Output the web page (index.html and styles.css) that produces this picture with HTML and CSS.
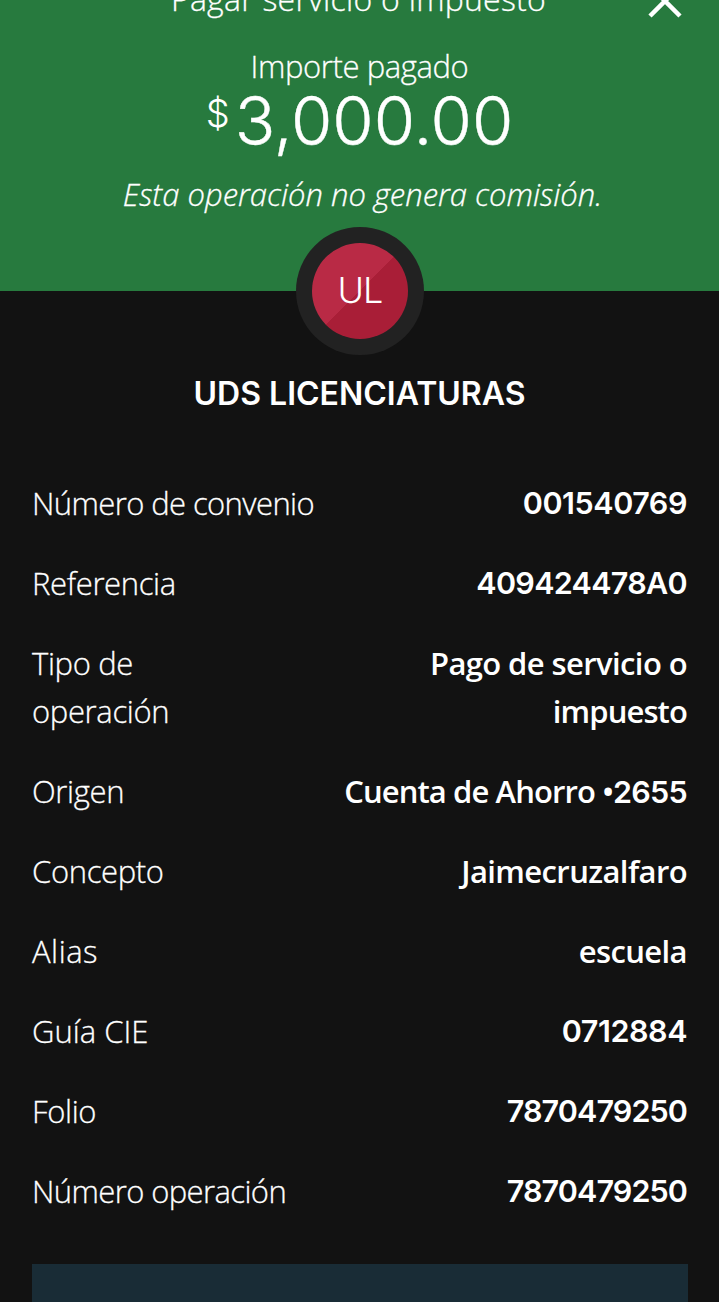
FILE: index.html
```html
<!DOCTYPE html>
<html lang="es"><head><meta charset="utf-8"><title>Pago</title><link rel="stylesheet" href="styles.css"></head>
<body>
<main class="screen">
<header class="hero">
<div class="topbar"><h1 class="title">Pagar servicio o impuesto</h1>
<svg class="close" width="34" height="34" viewBox="0 0 34 34"><path d="M2 2 32 32M32 2 2 32"/></svg></div>
<p class="label">Importe pagado</p>
<p class="amount"><span class="currency">$</span><span class="figure">3,000.00</span></p>
<p class="note">Esta operación no genera comisión.</p>
<div class="avatar"><span class="disc">UL</span></div>
</header>
<h2 class="payee">UDS LICENCIATURAS</h2>
<dl class="details">
<div class="row"><dt class="tight">Número de convenio</dt><dd class="num wide">001540769</dd></div>
<div class="row"><dt>Referencia</dt><dd class="num">409424478A0</dd></div>
<div class="row"><dt>Tipo de<br>operación</dt><dd>Pago de servicio o<br><span class="narrow">impuesto</span></dd></div>
<div class="row"><dt>Origen</dt><dd class="account">Cuenta de Ahorro •<span class="num">2655</span></dd></div>
<div class="row"><dt>Concepto</dt><dd>Jaimecruzalfaro</dd></div>
<div class="row"><dt class="loose">Alias</dt><dd>escuela</dd></div>
<div class="row"><dt class="even">Guía CIE</dt><dd class="num wide">0712884</dd></div>
<div class="row"><dt>Folio</dt><dd class="num folio">7870479250</dd></div>
<div class="row"><dt class="tight">Número operación</dt><dd class="num folio">7870479250</dd></div>
</dl>
<div class="panel"></div>
</main>
</body></html>
```
FILE: styles.css
```css
*{box-sizing:border-box;margin:0;padding:0}
body{background:#121212;color:#fff;font-family:"Open Sans",sans-serif;font-weight:300}
.screen{width:719px;height:1302px;overflow:hidden;display:flex;flex-direction:column}
.hero{position:relative;height:291px;flex:none;background:#277a3e;text-align:center}
.topbar{height:43px;position:relative}
.title,.label,.note,dt{-webkit-text-stroke:.3px #fff}
.title{font-size:32px;font-weight:300;line-height:44px;letter-spacing:.25px;position:relative;left:-1px;top:-23px}
.close{position:absolute;left:648px;top:-16px;fill:none;stroke:#fff;stroke-width:4.5}
.label{font-size:31px;line-height:46px;letter-spacing:-.4px}
.amount{height:83px;display:flex;justify-content:center;line-height:63px;font-family:Inter,sans-serif}
.currency{font-size:38px;line-height:49px;margin-right:5px}
.figure{font-size:67px;-webkit-text-stroke:.4px #fff}
.note{font-size:31px;line-height:44px;font-style:italic;padding-left:6px}
.avatar{position:absolute;left:296px;top:227px;width:128px;height:128px;border-radius:50%;background:#222;padding:16px}
.disc{display:block;height:96px;border-radius:50%;background:linear-gradient(135deg,#b92a45 50%,#a91e37 50%);font-family:Inter,sans-serif;font-size:36px;line-height:94px;letter-spacing:-1px}
.payee{font-family:Inter,sans-serif;font-size:32px;line-height:48px;font-weight:600;text-align:center;margin-top:79px}
.details{padding:61px 32px 0;display:flex;flex-direction:column;gap:32px}
.row{display:flex;justify-content:space-between;font-size:31px;line-height:48px}
dt{letter-spacing:-.35px}
.tight{letter-spacing:-.6px}
.loose{letter-spacing:.5px}
.even{letter-spacing:0}
dd{text-align:right;font-weight:600;letter-spacing:-.6px;white-space:nowrap}
.account{letter-spacing:-.9px}
.narrow{letter-spacing:-.9px}
.num{font-family:Inter,sans-serif;font-size:30.5px;letter-spacing:-.7px;line-height:1}
dd.num{line-height:48px}
.wide{letter-spacing:-.45px}
.folio{letter-spacing:-.9px}
.panel{height:40px;margin:49px 31px 0 32px;background:#192c36;flex:none}
```
